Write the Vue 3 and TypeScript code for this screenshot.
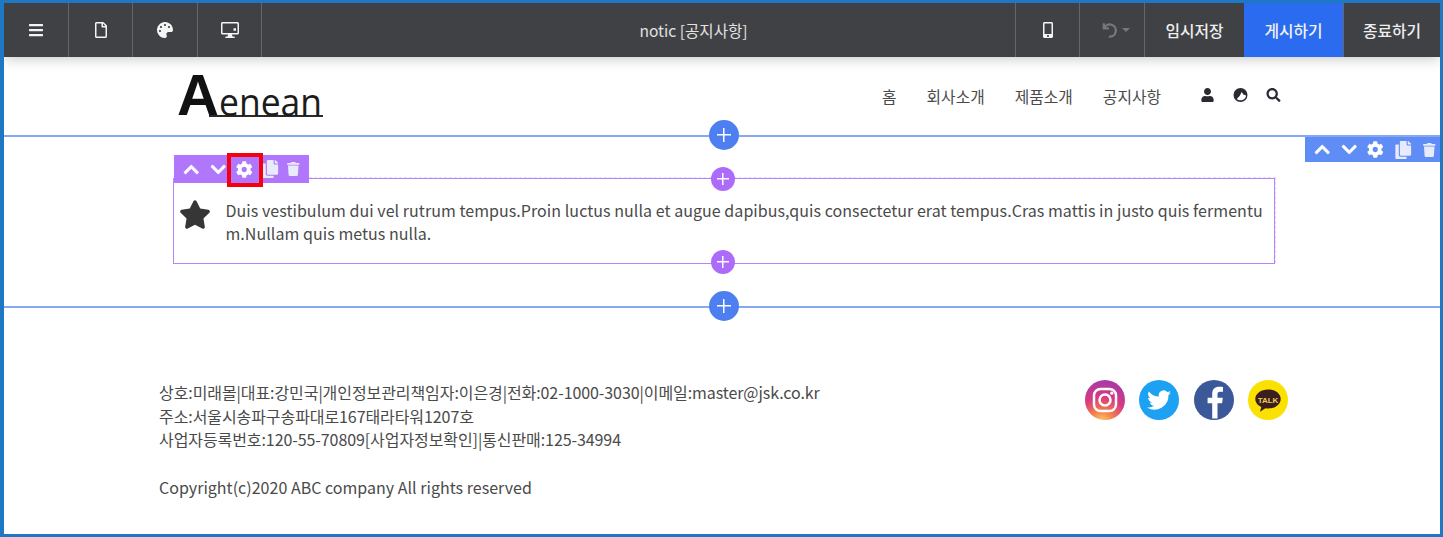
<script setup lang="ts">
interface Glyph {
  box: string
  d: string
}

const icons: Record<string, Glyph> = {
  bars: { box: '0 0 448 512', d: 'M16 132h416c8.837 0 16-7.163 16-16V76c0-8.837-7.163-16-16-16H16C7.163 60 0 67.163 0 76v40c0 8.837 7.163 16 16 16zm0 160h416c8.837 0 16-7.163 16-16v-40c0-8.837-7.163-16-16-16H16c-8.837 0-16 7.163-16 16v40c0 8.837 7.163 16 16 16zm0 160h416c8.837 0 16-7.163 16-16v-40c0-8.837-7.163-16-16-16H16c-8.837 0-16 7.163-16 16v40c0 8.837 7.163 16 16 16z' },
  file: { box: '0 0 384 512', d: 'M369.9 97.9L286 14C277 5 264.8-.1 252.1-.1H48C21.5 0 0 21.5 0 48v416c0 26.5 21.5 48 48 48h288c26.5 0 48-21.5 48-48V131.9c0-12.7-5.1-25-14.1-34zM332.1 128H256V51.9l76.1 76.1zM48 464V48h160v104c0 13.3 10.7 24 24 24h104v288H48z' },
  palette: { box: '0 0 512 512', d: 'M204.3 5C104.9 24.4 24.8 104.3 5.2 203.4c-37 187 131.7 326.4 258.8 306.7 41.2-6.4 61.4-54.6 42.5-91.7-23.1-45.4 9.9-98.4 60.9-98.4h79.7c35.8 0 64.8-29.6 64.9-65.3C511.5 97.1 368.1-26.9 204.3 5zM96 320c-17.7 0-32-14.3-32-32s14.3-32 32-32 32 14.3 32 32-14.3 32-32 32zm32-128c-17.7 0-32-14.3-32-32s14.3-32 32-32 32 14.3 32 32-14.3 32-32 32zm128-64c-17.7 0-32-14.3-32-32s14.3-32 32-32 32 14.3 32 32-14.3 32-32 32zm128 64c-17.7 0-32-14.3-32-32s14.3-32 32-32 32 14.3 32 32-14.3 32-32 32z' },
  desktop: { box: '0 0 576 512', d: 'M528 0H48C21.5 0 0 21.5 0 48v304c0 26.5 21.5 48 48 48h176l-12 64h-56c-13 0-24 11-24 24s11 24 24 24h264c13 0 24-11 24-24s-11-24-24-24h-56l-12-64h176c26.5 0 48-21.5 48-48V48c0-26.5-21.5-48-48-48zm0 340c0 6.600-5.400 12-12 12H60c-6.600 0-12-5.400-12-12V60c0-6.600 5.400-12 12-12h456c6.600 0 12 5.400 12 12zM400 200h80v80h-80z' },
  mobile: { box: '0 0 320 512', d: 'M272 0H48C21.5 0 0 21.5 0 48v416c0 26.5 21.5 48 48 48h224c26.5 0 48-21.5 48-48V48c0-26.5-21.5-48-48-48zM160 480c-17.7 0-32-14.3-32-32s14.3-32 32-32 32 14.3 32 32-14.3 32-32 32zm112-108c0 6.600-5.400 12-12 12H60c-6.600 0-12-5.400-12-12V60c0-6.600 5.400-12 12-12h200c6.600 0 12 5.400 12 12v312z' },
  user: { box: '0 0 448 512', d: 'M224 256c70.700 0 128-57.300 128-128S294.700 0 224 0 96 57.300 96 128s57.300 128 128 128zm89.600 32h-16.700c-22.200 10.200-46.900 16-72.900 16s-50.600-5.800-72.900-16h-16.700C60.200 288 0 348.200 0 422.400V464c0 26.500 21.500 48 48 48h352c26.500 0 48-21.500 48-48v-41.600c0-74.200-60.200-134.400-134.400-134.400z' },
  globe: { box: '0 0 512 512', d: 'M256 0a256 256 0 1 0 0 512 256 256 0 0 0 0-512zM120 400l110-120 70-130 60 90 100 30c-10 100-95 182-204 182-55 0-100-20-136-52z' },
  search: { box: '0 0 512 512', d: 'M505 442.700L405.300 343c-4.500-4.500-10.600-7-17-7H372c27.600-35.300 44-79.700 44-128C416 93.100 322.900 0 208 0S0 93.100 0 208s93.100 208 208 208c48.300 0 92.700-16.400 128-44v16.300c0 6.400 2.500 12.500 7 17l99.700 99.700c9.400 9.400 24.600 9.400 33.900 0l28.300-28.300c9.400-9.400 9.400-24.600.1-34zM208 336c-70.700 0-128-57.200-128-128 0-70.700 57.200-128 128-128 70.700 0 128 57.200 128 128 0 70.700-57.200 128-128 128z' },
  up: { box: '0 0 448 512', d: 'M240.971 130.524l194.343 194.343c9.373 9.373 9.373 24.569 0 33.941l-22.667 22.667c-9.357 9.357-24.522 9.375-33.901.04L224 227.495 69.255 381.516c-9.379 9.335-24.544 9.317-33.901-.04l-22.667-22.667c-9.373-9.373-9.373-24.569 0-33.941L207.030 130.525c9.372-9.373 24.568-9.373 33.941-.001z' },
  down: { box: '0 0 448 512', d: 'M207.029 381.476L12.686 187.132c-9.373-9.373-9.373-24.569 0-33.941l22.667-22.667c9.357-9.357 24.522-9.375 33.901-.04L224 284.505l154.745-154.021c9.379-9.335 24.544-9.317 33.901.04l22.667 22.667c9.373 9.373 9.373 24.569 0 33.941L240.971 381.476c-9.373 9.372-24.569 9.372-33.942 0z' },
  cog: { box: '0 0 512 512', d: 'M487.400 315.700l-42.600-24.600c4.300-23.200 4.300-47 0-70.200l42.600-24.600c4.900-2.800 7.100-8.600 5.500-14-11.100-35.600-30-67.800-54.700-94.600-3.800-4.100-10-5.100-14.800-2.300L380.800 110c-17.900-15.400-38.500-27.300-60.800-35.100V25.800c0-5.600-3.900-10.500-9.400-11.700-36.700-8.200-74.300-7.800-109.200 0-5.500 1.200-9.400 6.100-9.400 11.700V75c-22.200 7.900-42.800 19.800-60.800 35.100L88.700 85.500c-4.900-2.800-11-1.900-14.800 2.300-24.700 26.700-43.600 58.900-54.700 94.600-1.700 5.400.6 11.200 5.500 14L67.300 221c-4.300 23.200-4.300 47 0 70.200l-42.600 24.600c-4.900 2.800-7.100 8.600-5.500 14 11.100 35.600 30 67.800 54.700 94.600 3.800 4.100 10 5.100 14.800 2.300l42.600-24.600c17.900 15.400 38.500 27.300 60.800 35.100v49.200c0 5.600 3.900 10.500 9.400 11.700 36.700 8.200 74.300 7.800 109.200 0 5.500-1.200 9.400-6.100 9.400-11.700v-49.200c22.200-7.900 42.800-19.800 60.800-35.100l42.600 24.600c4.900 2.800 11 1.900 14.800-2.300 24.700-26.700 43.600-58.900 54.700-94.600 1.500-5.500-.7-11.300-5.600-14.100zM256 336c-44.100 0-80-35.900-80-80s35.900-80 80-80 80 35.900 80 80-35.900 80-80 80z' },
  copy: { box: '0 0 448 512', d: 'M320 448v40c0 13.255-10.745 24-24 24H24c-13.255 0-24-10.745-24-24V120c0-13.255 10.745-24 24-24h72v296c0 30.879 25.121 56 56 56h168zm0-344V0H152c-13.255 0-24 10.745-24 24v368c0 13.255 10.745 24 24 24h272c13.255 0 24-10.745 24-24V128H344c-13.200 0-24-10.800-24-24zm120.971-31.029L375.029 7.029A24 24 0 0 0 358.059 0H352v96h96v-6.059a24 24 0 0 0-7.029-16.970z' },
  trash: { box: '0 0 448 512', d: 'M432 32H312l-9.400-18.700A24 24 0 0 0 281.100 0H166.800a23.720 23.720 0 0 0-21.400 13.300L136 32H16A16 16 0 0 0 0 48v32a16 16 0 0 0 16 16h416a16 16 0 0 0 16-16V48a16 16 0 0 0-16-16zM53.200 467a48 48 0 0 0 47.900 45h245.800a48 48 0 0 0 47.900-45L416 128H32z' },
  star: { box: '0 0 576 512', d: 'M259.300 17.800L194 150.200 47.900 171.500c-26.200 3.800-36.700 36.100-17.700 54.600l105.700 103-25 145.500c-4.500 26.300 23.200 46 46.400 33.700L288 439.600l130.700 68.700c23.200 12.200 50.900-7.400 46.400-33.700l-25-145.500 105.700-103c19-18.500 8.500-50.800-17.700-54.600L382 150.200 316.700 17.800c-11.700-23.600-45.600-23.900-57.400 0z' },
}

const leftTools = ['bars', 'file', 'palette', 'desktop']
const navItems = ['홈', '회사소개', '제품소개', '공지사항']
const navIcons = ['user', 'globe', 'search']
const editTools = ['up', 'down', 'cog', 'copy', 'trash']
</script>

<template>
  <div class="frame">
    <div class="toolbar">
      <button v-for="name in leftTools" :key="name" class="tool">
        <svg class="tool-icon" :viewBox="icons[name].box"><path :d="icons[name].d" /></svg>
      </button>
      <div class="page-title">notic [공지사항]</div>
      <button class="tool tool-mobile">
        <svg class="tool-icon" :viewBox="icons.mobile.box"><path :d="icons.mobile.d" /></svg>
      </button>
      <button class="tool tool-undo">
        <svg class="undo" viewBox="0 0 16 16">
          <path d="M2.500 2v4.500H7M2.800 6.300A5.400 5.400 0 1 1 7 13.800" />
        </svg>
        <span class="caret"></span>
      </button>
      <button class="text-btn">임시저장</button>
      <button class="text-btn publish">게시하기</button>
      <button class="text-btn last">종료하기</button>
    </div>

    <header class="site-header">
      <div class="logo">
        <span class="logo-a">A</span>
        <span class="logo-word"><span class="logo-letters">enean</span></span>
      </div>
      <nav class="nav">
        <a v-for="item in navItems" :key="item" class="nav-link">{{ item }}</a>
        <div class="nav-icons">
          <svg v-for="name in navIcons" :key="name" class="nav-icon" :viewBox="icons[name].box"><path :d="icons[name].d" /></svg>
        </div>
      </nav>
    </header>

    <section class="section">
      <button class="plus plus-blue plus-top"></button>
      <div class="section-tools">
        <svg v-for="name in editTools" :key="name" class="edit-icon" :class="name" :viewBox="icons[name].box"><path :d="icons[name].d" /></svg>
      </div>

      <div class="block">
        <div class="block-tools">
          <svg v-for="name in editTools" :key="name" class="edit-icon" :class="name" :viewBox="icons[name].box"><path :d="icons[name].d" /></svg>
          <span class="marker"></span>
        </div>
        <button class="plus plus-purple plus-block-top"></button>
        <svg class="star" :viewBox="icons.star.box"><path :d="icons.star.d" /></svg>
        <p class="block-text">Duis vestibulum dui vel rutrum tempus.Proin luctus nulla et augue dapibus,quis consectetur erat tempus.Cras mattis in justo quis fermentum.Nullam quis metus nulla.</p>
        <button class="plus plus-purple plus-block-bottom"></button>
      </div>

      <button class="plus plus-blue plus-bottom"></button>
    </section>

    <footer class="footer">
      <div class="footer-text">
        <div class="info">상호:미래몰|대표:강민국|개인정보관리책임자:이은경|전화:02-1000-3030|이메일:master@jsk.co.kr</div>
        <div class="info">주소:서울시송파구송파대로167태라타워1207호</div>
        <div class="info">사업자등록번호:120-55-70809[사업자정보확인]|통신판매:125-34994</div>
        <div class="copyright">Copyright(c)2020 ABC company All rights reserved</div>
      </div>
      <div class="social">
        <svg class="social-icon" viewBox="0 0 40 40">
          <defs>
            <radialGradient id="ig" cx="42%" cy="108%" r="105%">
              <stop offset="0" stop-color="#fdd67a" />
              <stop offset="0.28" stop-color="#f5834a" />
              <stop offset="0.62" stop-color="#d93a80" />
              <stop offset="1" stop-color="#a93aa5" />
            </radialGradient>
          </defs>
          <circle cx="20" cy="20" r="20" fill="url(#ig)" />
          <rect x="9" y="9" width="22" height="22" rx="6.500" fill="none" stroke="#fff" stroke-width="2.500" />
          <circle cx="20" cy="20" r="5.500" fill="none" stroke="#fff" stroke-width="2.500" />
          <circle cx="26.800" cy="13.200" r="1.600" fill="#fff" />
        </svg>
        <svg class="social-icon" viewBox="0 0 40 40">
          <circle cx="20" cy="20" r="20" fill="#1da1f2" />
          <path fill="#fff" d="M32 12.800c-.9.400-1.800.7-2.800.8 1-.6 1.800-1.600 2.200-2.700-1 .6-2 1-3.100 1.200a4.900 4.900 0 0 0-8.400 4.500c-4.100-.2-7.700-2.200-10.100-5.200a4.900 4.900 0 0 0 1.500 6.600c-.8 0-1.600-.2-2.200-.6v.1c0 2.400 1.700 4.400 3.900 4.800-.7.200-1.500.2-2.200.1.600 1.900 2.400 3.400 4.600 3.400A9.900 9.900 0 0 1 8 27.400a14 14 0 0 0 21.500-12.400c1-.6 1.800-1.400 2.500-2.200z" />
        </svg>
        <svg class="social-icon" viewBox="0 0 40 40">
          <circle cx="20" cy="20" r="20" fill="#3b5998" />
          <path fill="#fff" d="M23.500 38.500V23.200h4.600l.7-5.400h-5.300v-3.400c0-1.600.5-2.600 2.700-2.600h2.800V7c-.5-.1-2.200-.2-4-.2-4 0-6.800 2.500-6.800 7v4h-4.600v5.400h4.600v15.300z" />
        </svg>
        <svg class="social-icon" viewBox="0 0 40 40">
          <circle cx="20" cy="20" r="20" fill="#fae100" />
          <path fill="#3c1e1e" d="M20 9.500c-7 0-12.700 4.200-12.700 9.400 0 3.400 2.400 6.400 6 8l-1.300 4.800 5.400-3.400c.8.100 1.700.2 2.600.2 7 0 12.700-4.200 12.700-9.600S27 9.500 20 9.500z" />
          <text class="talk" x="20" y="22.500" text-anchor="middle">TALK</text>
        </svg>
      </div>
    </footer>
  </div>
</template>

<style>
html, body {
  margin: 0;
  background: #fff;
}
</style>

<style scoped>
.frame {
  box-sizing: border-box;
  width: 1443px;
  height: 537px;
  border: 3px solid #1f78c4;
  border-left-width: 4px;
  overflow: hidden;
  background: #fff;
  color: #4a4a4a;
  font-family: "Noto Sans CJK KR", "Noto Sans", sans-serif;
  font-size: 16px;
}

button {
  border: 0;
  padding: 0;
  font-family: inherit;
  background: none;
}

.toolbar {
  position: relative;
  z-index: 3;
  display: flex;
  height: 54px;
  background: #404145;
  box-shadow: 0 2px 12px rgba(0, 0, 0, 0.22);
  color: #e8e8e8;
}

.tool {
  display: flex;
  flex: none;
  align-items: center;
  justify-content: center;
  box-sizing: border-box;
  width: 64px;
  border-right: 1px solid #66676a;
}

.tool:nth-child(odd) {
  width: 65px;
}

.tool-icon {
  width: 18px;
  height: 16px;
  fill: #f4f4f4;
}

.tool-mobile {
  width: 65px;
  border-left: 1px solid #66676a;
}

.tool-undo {
  width: 64px;
  padding-left: 6px;
  gap: 3px;
}

.undo {
  width: 18px;
  height: 18px;
  fill: none;
  stroke: #77787b;
  stroke-width: 2;
}

.caret {
  border-top: 4px solid #77787b;
  border-left: 4px solid transparent;
  border-right: 4px solid transparent;
}

.page-title {
  flex: 1;
  padding-left: 110px;
  text-align: center;
  line-height: 54px;
  font-size: 15.600px;
  color: #e2e2e2;
}

.text-btn {
  flex: none;
  width: 99px;
  color: #eee;
  font-size: 15.800px;
  font-weight: 500;
}

.publish {
  background: #2a6bf0;
  color: #f2f2f2;
}

.last {
  width: 97px;
  border-left: 1px solid #66676a;
}

.site-header {
  display: flex;
  align-items: center;
  justify-content: space-between;
  box-sizing: border-box;
  height: 78px;
  padding: 0 159px 0 173px;
}

.logo {
  display: flex;
  align-items: flex-end;
  color: #1c1c1c;
}

.logo-a {
  margin-bottom: 2px;
  font-family: "Liberation Sans", sans-serif;
  font-size: 58px;
  font-weight: 700;
  line-height: 40px;
  color: #111;
}

.logo-word {
  box-sizing: border-box;
  width: 114px;
  margin-left: -10px;
  padding-left: 10px;
  border-bottom: 2px solid #2a2a2a;
  font-family: "Open Sans", sans-serif;
  font-size: 39px;
  line-height: 29px;
}

.logo-letters {
  display: inline-block;
  transform: scaleX(0.91);
  transform-origin: left;
}

.nav {
  display: flex;
  align-items: center;
  gap: 30px;
}

.nav-link {
  font-size: 15.800px;
  color: #4a4a4a;
}

.nav-icons {
  display: flex;
  gap: 18px;
  margin-left: 9px;
  margin-bottom: 3px;
}

.nav-icon {
  width: 15px;
  height: 14px;
  fill: #2a2a33;
  fill-rule: evenodd;
}

.section {
  position: relative;
  box-sizing: border-box;
  height: 173px;
  padding: 41px 165px 0 169px;
  border-top: 2px solid #86a7f2;
  border-bottom: 2px solid #86a7f2;
}

.plus {
  position: absolute;
  border-radius: 50%;
  background-image:
    linear-gradient(#fff, #fff),
    linear-gradient(#fff, #fff);
  background-repeat: no-repeat;
  background-position: center;
}

.plus-blue {
  left: 705px;
  width: 30px;
  height: 30px;
  background-color: #4d7ff0;
  background-size: 14px 1.500px, 1.500px 14px;
}

.plus-purple {
  left: 537px;
  width: 24px;
  height: 24px;
  background-color: #ad6bfa;
  background-size: 12px 1.500px, 1.500px 12px;
}

.plus-top {
  top: -17px;
}

.plus-bottom {
  bottom: -15px;
}

.plus-block-top {
  top: -12px;
}

.plus-block-bottom {
  bottom: -11px;
}

.section-tools,
.block-tools {
  position: absolute;
  display: flex;
  align-items: center;
  box-sizing: border-box;
  padding-left: 4px;
}

.section-tools {
  top: 0;
  right: 0;
  width: 135px;
  height: 25px;
  background: #5f8df5;
}

.block-tools {
  top: -24px;
  left: 0;
  width: 135px;
  height: 28px;
  background: #b077fd;
}

.edit-icon {
  flex: none;
  width: 26.500px;
  height: 17px;
  fill: #fff;
}

.edit-icon.up,
.edit-icon.down {
  stroke: #fff;
  stroke-width: 16;
}

.edit-icon.copy {
  height: 18px;
  fill: #e8ebfc;
}

.edit-icon.trash {
  height: 14px;
  fill: #e8ebfc;
}

.block-tools .copy {
  margin-left: -1px;
}

.block-tools .trash {
  margin-left: -3px;
}

.section-tools .copy {
  margin-left: 1px;
}

.marker {
  position: absolute;
  left: 53px;
  top: -2px;
  box-sizing: border-box;
  width: 36px;
  height: 34px;
  border: 4px solid #f5000f;
}

.block {
  position: relative;
  display: flex;
  box-sizing: border-box;
  height: 86px;
  padding: 20px 8px 0 5px;
  border: 1px solid #b585fb;
}

/* the pale dashes that sit just outside the solid edge */
.block::before {
  content: "";
  position: absolute;
  top: -2px;
  right: -2px;
  bottom: 0;
  left: 135px;
  border-top: 1px dashed #e6dafd;
  border-right: 1px dashed #e6dafd;
  pointer-events: none;
}

.star {
  flex: none;
  width: 32px;
  height: 29px;
  margin-top: 1px;
  fill: #363636;
}

.block-text {
  flex: 1;
  margin: 0 0 0 14.500px;
  font-size: 16px;
  line-height: 23px;
  letter-spacing: 0.053px;
  word-break: break-all;
}

.footer {
  display: flex;
  justify-content: space-between;
  padding: 73px 152px 0 155px;
}

.footer-text {
  font-size: 16px;
  line-height: 23.500px;
}

.info {
  letter-spacing: -0.08px;
}

.copyright {
  margin-top: 24.500px;
  letter-spacing: 0.02px;
}

.social {
  display: flex;
  gap: 14.500px;
  margin-top: -1px;
}

.social-icon {
  width: 40px;
  height: 40px;
}

.talk {
  font-family: "Liberation Sans", sans-serif;
  font-size: 8px;
  font-weight: 700;
  fill: #e8cf5a;
}
</style>
